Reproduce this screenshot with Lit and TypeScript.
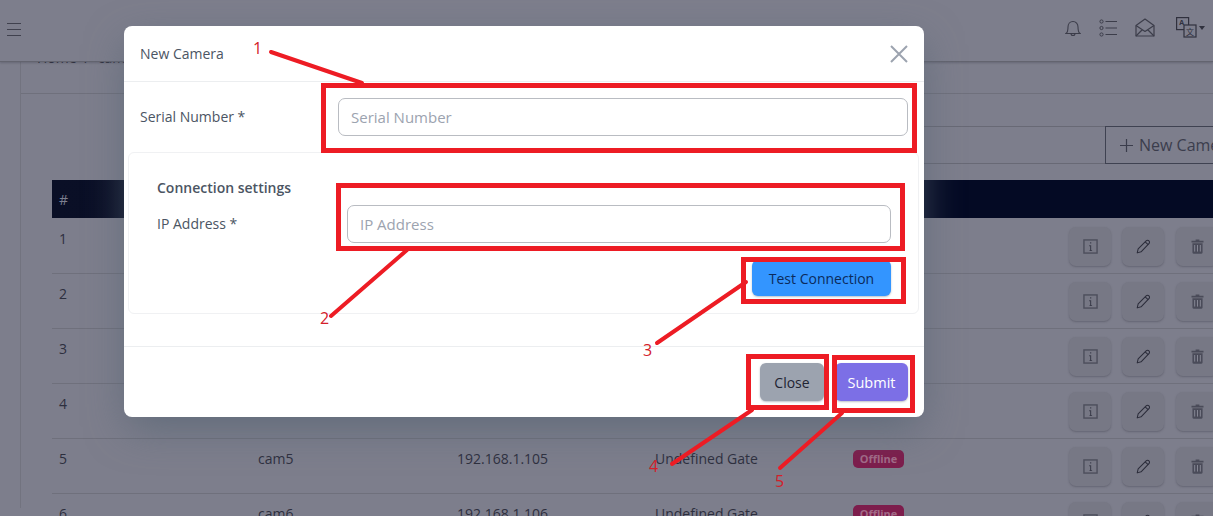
import { LitElement, html, css, svg } from 'lit';
import { customElement } from 'lit/decorators.js';

const cameras = [1, 2, 3, 4, 5, 6].map((n) => ({
  id: n,
  name: `cam${n}`,
  ip: `192.168.1.${100 + n}`,
  gate: 'Undefined Gate',
  status: 'Offline',
}));

const infoIcon = html`<svg class="icon" viewBox="0 0 16 16" fill="none">
  <rect x="1" y="1" width="14" height="14" stroke="#4d4e5c" stroke-width="1.5"/>
  <path d="M7.600 3.400h1.200v1.400H7.600zM6.600 6.600h2.100v4.800c0 .5.4.7 1 .6v.8H6.900v-.8c.5 0 .7-.2.7-.6V7.600h-1z" fill="#3a3b49"/>
</svg>`;

const pencilIcon = html`<svg class="icon" viewBox="0 0 16 16" fill="none" stroke="#2b2c3a" stroke-width="1.1" stroke-linejoin="round">
  <path d="M1.300 14.800l1-4.200L10.800 2a2.100 2.100 0 0 1 3 3l-8.400 8.700z"/>
  <path d="M9.800 3l3.100 3"/>
</svg>`;

const trashIcon = html`<svg class="icon" viewBox="0 0 16 16">
  <path d="M6 .6h4v1.200h4.400v1.800H1.600V1.800H6z" fill="#4a4b59"/>
  <path d="M2.600 4.400h10.800v10a1.200 1.200 0 0 1-1.200 1.200H3.800a1.200 1.200 0 0 1-1.200-1.200z" fill="#4a4b59"/>
  <path d="M5 6.400v7M8 6.400v7M11 6.400v7" stroke="#8a8b97" stroke-width="1"/>
</svg>`;

@customElement('app-root')
export class AppRoot extends LitElement {
  static styles = css`
    :host {
      display: block;
      position: relative;
      width: 1213px;
      height: 516px;
      overflow: hidden;
      background: #7d7e8c;
      font-family: "Open Sans", "Liberation Sans", sans-serif;
      font-size: 14px;
      color: #2d2f3e;
    }

    /* dimmed page behind the dialog */
    .topbar {
      position: relative;
      z-index: 1;
      height: 62px;
      box-sizing: border-box;
      display: flex;
      align-items: center;
      justify-content: space-between;
      padding: 0 8px 0 7px;
      background: #7d7e8c;
      border-bottom: 1px solid #63646f;
      box-shadow: 0 1px 2px rgba(60, 60, 75, 0.35);
    }
    .burger {
      width: 14px;
      height: 13px;
      margin-top: -3px;
      border-top: 1px solid #40414e;
      border-bottom: 1px solid #40414e;
      position: relative;
      box-sizing: border-box;
    }
    .burger::after {
      content: '';
      position: absolute;
      left: 0;
      right: 0;
      top: 5px;
      border-top: 1px solid #40414e;
    }
    .tools {
      display: flex;
      align-items: center;
      gap: 18px;
      margin-top: -6px;
    }
    .tools svg {
      display: block;
    }
    .lang {
      display: flex;
      align-items: center;
      gap: 2px;
      margin-left: 3px;
    }
    .caret {
      width: 0;
      height: 0;
      border: 3px solid transparent;
      border-top: 4px solid #30313e;
      border-bottom: 0;
    }
    .content {
      margin-left: 20px;
      border-left: 1px solid #72737f;
      height: 460px;
    }
    .crumb {
      margin-top: -14px;
      height: 46px;
      box-sizing: border-box;
      padding-left: 16px;
      display: flex;
      gap: 8px;
      line-height: 20px;
      border-bottom: 1px solid #6f707c;
      white-space: nowrap;
      color: #2d2f3e;
    }
    .toolbar {
      display: flex;
      margin-top: 32px;
      height: 38px;
      padding-left: 120px;
    }
    .search {
      flex: 0 0 964px;
      box-sizing: border-box;
      border-top: 1px solid #686975;
      border-bottom: 1px solid #686975;
    }
    .new-btn {
      flex: none;
      width: 130px;
      box-sizing: border-box;
      border: 1px solid #3f4251;
      border-right: 0;
      display: flex;
      align-items: center;
      gap: 6px;
      padding-left: 14px;
      font-size: 16px;
      color: #3b3d4c;
      white-space: nowrap;
      overflow: hidden;
    }
    .new-btn svg {
      flex: none;
    }
    .table {
      margin: 16px 0 0 31px;
      width: 1300px;
    }
    .row {
      display: grid;
      grid-template-columns: 206px 199px 198px 198px 216px auto;
      height: 55px;
      box-sizing: border-box;
      align-items: center;
      border-bottom: 1px solid #6f707c;
    }
    .row > span {
      padding-bottom: 16px;
    }
    .head {
      height: 38px;
      margin-bottom: 1px;
      background: linear-gradient(90deg, #0a0f26, #040a24 60%);
      color: #7c7f90;
      border: 0;
    }
    .head > span {
      padding-bottom: 0;
    }
    .row > :first-child {
      padding-left: 7px;
    }
    .badge {
      display: inline-block;
      width: 51px;
      height: 18px;
      margin-top: 2px;
      line-height: 18px;
      border-radius: 5px;
      text-align: center;
      font-size: 11px;
      font-weight: 700;
      background: #7d1d4c;
      color: #a26a87;
    }
    .actions {
      display: flex;
      gap: 11px;
    }
    .action {
      width: 42px;
      height: 39px;
      border-radius: 7px;
      background: #777885;
      box-shadow: 0 1px 2px rgba(70, 70, 85, 0.45);
      display: flex;
      align-items: center;
      justify-content: center;
    }
    .action:last-child {
      margin-left: 1px;
    }
    .icon {
      width: 15px;
      height: 15px;
      display: block;
    }

    /* dialog */
    .overlay {
      position: absolute;
      inset: 0;
      z-index: 2;
      padding: 26px 289px 0 124px;
    }
    .modal {
      height: 391px;
      box-sizing: border-box;
      background: #fff;
      border-radius: 8px;
      box-shadow: 0 14px 40px -4px rgba(85, 100, 115, 0.75);
      display: flex;
      flex-direction: column;
      color: #4b5563;
    }
    .modal-head {
      height: 56px;
      box-sizing: border-box;
      flex: none;
      display: flex;
      align-items: center;
      justify-content: space-between;
      padding: 0 16px;
      border-bottom: 1px solid #eceef0;
    }
    .close-x {
      display: block;
    }
    .field {
      display: flex;
      align-items: flex-start;
    }
    .field label {
      line-height: 38px;
      white-space: nowrap;
    }
    .serial {
      padding: 16px 16px 0;
      height: 70px;
      flex: none;
      box-sizing: border-box;
    }
    .serial label {
      width: 198px;
      flex: none;
    }
    input {
      flex: 1;
      min-width: 0;
      height: 38px;
      box-sizing: border-box;
      border: 1px solid #b9bcc2;
      border-radius: 7px;
      padding: 0 12px;
      font: inherit;
      font-size: 15px;
      background: #fff;
      outline: none;
    }
    input::placeholder {
      color: #9ca3af;
      opacity: 1;
    }
    .card {
      margin: 0 5px 0 4px;
      height: 162px;
      flex: none;
      box-sizing: border-box;
      border: 1px solid #f0f1f3;
      border-radius: 6px;
      padding: 24px 27px 0 28px;
    }
    .card h6 {
      margin: 0;
      font-size: 14px;
      line-height: 22px;
      font-weight: 600;
      color: #4b5563;
    }
    .ip {
      margin-top: 6px;
    }
    .ip label {
      width: 190px;
      flex: none;
    }
    .card-actions {
      display: flex;
      justify-content: flex-end;
      margin-top: 17px;
    }
    button {
      font: inherit;
      border: 0;
      border-radius: 6px;
      height: 38px;
      padding: 0;
      box-shadow: 0 1px 2px rgba(90, 100, 120, 0.4);
    }
    .test {
      width: 139px;
      height: 36px;
      background: #3395ff;
      color: #0b2b5c;
    }
    .modal-foot {
      margin-top: 32px;
      flex: 1;
      border-top: 1px solid #eceef0;
      display: flex;
      justify-content: flex-end;
      gap: 11px;
      padding: 16px 16px 0;
    }
    .close {
      width: 64px;
      background: #9ca3af;
      color: #1f2433;
    }
    .submit {
      width: 73px;
      background: #7c6fe6;
      color: #fff;
      font-weight: 500;
      font-size: 14.5px;
    }

    /* hand drawn callouts on top of the screenshot */
    .marks {
      position: absolute;
      inset: 0;
      z-index: 3;
      width: 100%;
      height: 100%;
      pointer-events: none;
    }
    .marks rect {
      fill: none;
      stroke: #ed1c24;
      stroke-width: 5;
    }
    .marks line {
      stroke: #ed1c24;
      stroke-width: 4;
      stroke-linecap: round;
    }
    .marks text {
      fill: #d3202a;
      font-family: "Open Sans", sans-serif;
      font-size: 16px;
    }
  `;

  renderTools() {
    return html`<div class="tools">
      <svg width="16" height="18" viewBox="0 0 16 18" fill="none" stroke="#3c3d4a" stroke-width="1.1">
        <path d="M1 14.500c1.500-1 2-3 2-6.500 0-3 2-5.500 5-5.500s5 2.500 5 5.500c0 3.500.5 5.500 2 6.500z"/>
        <path d="M6 14.500a2 2 0 0 0 4 0"/>
      </svg>
      <svg width="18" height="18" viewBox="0 0 18 18" fill="none" stroke="#3c3d4a" stroke-width="1">
        <circle cx="2.500" cy="2.500" r="1.600"/><circle cx="2.500" cy="9" r="1.600"/><circle cx="2.500" cy="15.500" r="1.600"/>
        <path d="M6.500 2.500H18M6.500 9H18M6.500 15.500H18"/>
      </svg>
      <svg width="20" height="19" viewBox="0 0 20 19" fill="none" stroke="#3c3d4a" stroke-width="1.200" stroke-linejoin="round">
        <path d="M1 7.500L10 1l9 6.500V18H1z"/>
        <path d="M1 7.500l9 6 9-6M1 18l6.500-6.500M19 18l-6.500-6.500"/>
      </svg>
      <div class="lang">
        <svg width="21" height="21" viewBox="0 0 21 21" fill="#7d7e8c" stroke="#30313e" stroke-width="1.200">
          <rect x=".6" y=".6" width="12" height="12"/>
          <rect x="8" y="8" width="12" height="12"/>
          <text x="3.200" y="7.500" font-size="7" font-family="Open Sans" font-weight="700" fill="#30313e" stroke="none">A</text>
          <text x="10" y="17.500" font-size="8" font-family="Noto Sans CJK SC" fill="#30313e" stroke="none">文</text>
        </svg>
        <span class="caret"></span>
      </div>
    </div>`;
  }

  renderMarks() {
    const boxes = [
      [323.5, 85.5, 591, 65],
      [338.5, 185.5, 564, 63],
      [743.5, 259.5, 160, 42],
      [748.5, 356.5, 78, 51],
      [834.5, 357.5, 78, 53],
    ];
    const lines = [
      [271, 52, 362, 83],
      [407, 250, 331, 316],
      [746, 282, 657, 343],
      [752, 410, 672, 464],
      [842, 413, 780, 468],
    ];
    const labels = [
      ['1', 253, 54],
      ['2', 320, 324],
      ['3', 643, 356],
      ['4', 649, 472],
      ['5', 775, 487],
    ];
    return html`<svg class="marks" viewBox="0 0 1213 516">
      ${boxes.map(([x, y, w, h]) => svg`<rect x=${x} y=${y} width=${w} height=${h}></rect>`)}
      ${lines.map(([x1, y1, x2, y2]) => svg`<line x1=${x1} y1=${y1} x2=${x2} y2=${y2}></line>`)}
      ${labels.map(([t, x, y]) => svg`<text x=${x} y=${y}>${t}</text>`)}
    </svg>`;
  }

  render() {
    return html`
      <header class="topbar">
        <div class="burger"></div>
        ${this.renderTools()}
      </header>
      <main class="content">
        <div class="crumb"><span>Home</span><span>/</span><span>cameras</span></div>
        <div class="toolbar">
          <div class="search"></div>
          <div class="new-btn">
            <svg width="13" height="13" viewBox="0 0 13 13" stroke="#3b3d4c" stroke-width="1.200"><path d="M6.500 0v13M0 6.500h13"/></svg>
            New Camera
          </div>
        </div>
        <div class="table">
          <div class="row head"><span>#</span></div>
          ${cameras.map(
            (c) => html`<div class="row">
              <span>${c.id}</span>
              <span>${c.name}</span>
              <span>${c.ip}</span>
              <span>${c.gate}</span>
              <span><span class="badge">${c.status}</span></span>
              <div class="actions">
                <div class="action">${infoIcon}</div>
                <div class="action">${pencilIcon}</div>
                <div class="action">${trashIcon}</div>
              </div>
            </div>`
          )}
        </div>
      </main>
      <div class="overlay">
        <div class="modal">
          <div class="modal-head">
            <span>New Camera</span>
            <svg class="close-x" width="18" height="18" viewBox="0 0 18 18" stroke="#9ca3af" stroke-width="2"><path d="M1 1l16 16M17 1L1 17"/></svg>
          </div>
          <div class="field serial">
            <label>Serial Number *</label>
            <input placeholder="Serial Number" />
          </div>
          <section class="card">
            <h6>Connection settings</h6>
            <div class="field ip">
              <label>IP Address *</label>
              <input placeholder="IP Address" />
            </div>
            <div class="card-actions"><button class="test">Test Connection</button></div>
          </section>
          <div class="modal-foot">
            <button class="close">Close</button>
            <button class="submit">Submit</button>
          </div>
        </div>
      </div>
      ${this.renderMarks()}
    `;
  }
}
